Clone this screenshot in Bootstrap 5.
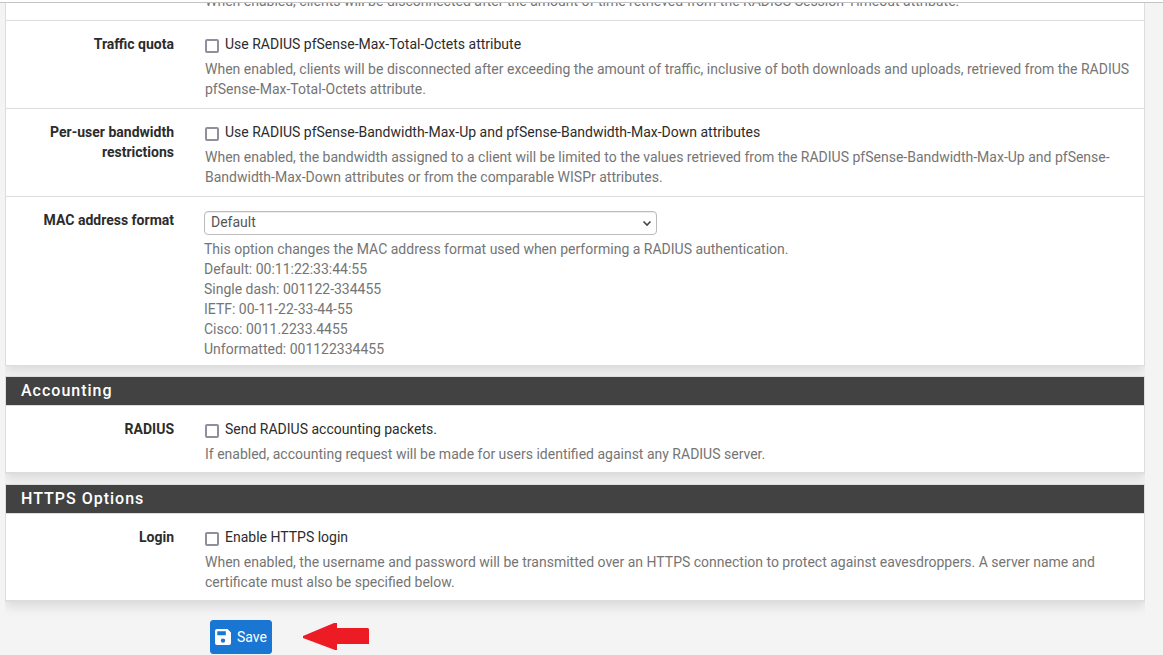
<!DOCTYPE html>
<html lang="en">
<head>
<meta charset="utf-8">
<meta name="viewport" content="width=device-width, initial-scale=1">
<title>Captive Portal</title>
<link href="https://cdn.jsdelivr.net/npm/bootstrap@5.3.0/dist/css/bootstrap.min.css" rel="stylesheet">
<style>
body { font-family: Roboto, "Liberation Sans", sans-serif; font-size: 14px; line-height: 20px; color: #2c2c2c; background: #f4f4f4; }
.top-edge { height: 3px; background: #fff; border-bottom: 1px solid #c4c4c4; }
.page-main { margin: 0 18px 0 5px; overflow: hidden; }
.panel { background: #fff; border: 1px solid #ddd; box-shadow: 0 5px 10px rgba(0,0,0,.1); margin-bottom: 10px; }
.panel.panel-first { border-top: 0; }
.panel-body { overflow: hidden; }
.panel-title { background: #424242; color: #fff; font-size: 16px; line-height: 20px; font-weight: 500; letter-spacing: 1px; padding: 4px 15px; margin: 0; border-bottom: 1px solid #ddd; }
.form-line { --bs-gutter-x: 30px; margin: 0 -10px; padding: 13px 0 9px; border-bottom: 1px solid #ddd; }
.form-line:last-child { padding-bottom: 8px; }
.form-line.line-cut { height: 18px; padding-top: 0; overflow: hidden; align-content: flex-end; }
.form-line.line-select { padding-bottom: 6px; border-bottom: 0; }
.field-name { font-weight: 700; text-align: right; }
.tick { padding-left: 1px; }
.tick input { appearance: none; flex: none; width: 14px; height: 14px; margin: 5px 6px 0 0; border: 2px solid #8f8f9d; border-radius: 2px; background: #fff; }
.tick input:checked { background: #1976d2; }
.hint { color: #757575; display: block; }
.tick + .hint, .line-cut .hint { padding-left: 1px; }
.tick + .hint { margin-top: 5px; }
.mac-select { height: 24px; margin: 1px 0 4px; padding: 0 24px 2px 6px; font-size: 14px; line-height: 20px; color: #555; border: 1px solid #bbb; border-radius: 4px; background-position: right 4px center; background-size: 10px 10px; box-shadow: inset 0 1px 1px rgba(0,0,0,.075); background-image: url("data:image/svg+xml,%3Csvg xmlns='http://www.w3.org/2000/svg' viewBox='0 0 10 10'%3E%3Cpath d='M1.5 3.5 5 7l3.500-3.500' fill='none' stroke='%23444' stroke-width='1.600'/%3E%3C/svg%3E"); }
.actions { padding: 8px 0 1px 205px; }
.btn-save { --bs-btn-color: #fff; --bs-btn-bg: #1976d2; --bs-btn-border-color: #1976d2; --bs-btn-hover-color: #fff; --bs-btn-hover-bg: #1565c0; --bs-btn-padding-x: 4px; --bs-btn-padding-y: 6px; --bs-btn-font-size: 14px; --bs-btn-line-height: 20px; --bs-btn-border-radius: 3px; gap: 6px; }
</style>
</head>
<body>
<div class="top-edge"></div>
<main class="page-main">
  <form>
    <section class="panel panel-first">
      <div class="panel-body">
        <div class="row form-line line-cut">
          <div class="col-10 offset-2"><span class="hint">When enabled, clients will be disconnected after the amount of time retrieved from the RADIUS Session-Timeout attribute.</span></div>
        </div>
        <div class="row form-line">
          <div class="col-2 field-name">Traffic quota</div>
          <div class="col-10">
            <label class="tick d-flex"><input type="checkbox"><span>Use RADIUS pfSense-Max-Total-Octets attribute</span></label>
            <span class="hint">When enabled, clients will be disconnected after exceeding the amount of traffic, inclusive of both downloads and uploads, retrieved from the RADIUS pfSense-Max-Total-Octets attribute.</span>
          </div>
        </div>
        <div class="row form-line">
          <div class="col-2 field-name">Per-user bandwidth restrictions</div>
          <div class="col-10">
            <label class="tick d-flex"><input type="checkbox"><span>Use RADIUS pfSense-Bandwidth-Max-Up and pfSense-Bandwidth-Max-Down attributes</span></label>
            <span class="hint">When enabled, the bandwidth assigned to a client will be limited to the values retrieved from the RADIUS pfSense-Bandwidth-Max-Up and pfSense-Bandwidth-Max-Down attributes or from the comparable WISPr attributes.</span>
          </div>
        </div>
        <div class="row form-line line-select">
          <label class="col-2 field-name" for="macformat">MAC address format</label>
          <div class="col-5">
            <select class="form-select mac-select" id="macformat">
              <option>Default</option><option>Single dash</option><option>IETF</option><option>Cisco</option><option>Unformatted</option>
            </select>
          </div>
          <div class="col-10 offset-2">
            <span class="hint">This option changes the MAC address format used when performing a RADIUS authentication.<br>Default: 00:11:22:33:44:55<br>Single dash: 001122-334455<br>IETF: 00-11-22-33-44-55<br>Cisco: 0011.2233.4455<br>Unformatted: 001122334455</span>
          </div>
        </div>
      </div>
    </section>
    <section class="panel">
      <h2 class="panel-title">Accounting</h2>
      <div class="panel-body">
        <div class="row form-line">
          <div class="col-2 field-name">RADIUS</div>
          <div class="col-10">
            <label class="tick d-flex"><input type="checkbox"><span>Send RADIUS accounting packets.</span></label>
            <span class="hint">If enabled, accounting request will be made for users identified against any RADIUS server.</span>
          </div>
        </div>
      </div>
    </section>
    <section class="panel">
      <h2 class="panel-title">HTTPS Options</h2>
      <div class="panel-body">
        <div class="row form-line">
          <div class="col-2 field-name">Login</div>
          <div class="col-10">
            <label class="tick d-flex"><input type="checkbox"><span>Enable HTTPS login</span></label>
            <span class="hint">When enabled, the username and password will be transmitted over an HTTPS connection to protect against eavesdroppers. A server name and certificate must also be specified below.</span>
          </div>
        </div>
      </div>
    </section>
    <div class="actions d-flex align-items-center">
      <button type="button" class="btn btn-save d-flex align-items-center">
        <svg width="16" height="16" viewBox="0 0 16 16" aria-hidden="true"><path fill="#fff" fill-rule="evenodd" d="M2 0h10.500L16 3.500V14a2 2 0 0 1-2 2H2a2 2 0 0 1-2-2V2a2 2 0 0 1 2-2zM2.300 2.200v4h8.500v-4zM8 9.400a2.200 2.200 0 1 0 0 4.400A2.200 2.200 0 0 0 8 9.400z"/></svg>
        Save
      </button>
      <svg class="ms-4" width="74" height="28" viewBox="0 0 74 28" aria-hidden="true"><path fill="#ed1c24" d="M7 13 38 0h3v5h31l1 1v15H41v6h-2L7 15z"/></svg>
    </div>
  </form>
</main>
<script src="https://cdn.jsdelivr.net/npm/bootstrap@5.3.0/dist/js/bootstrap.bundle.min.js"></script>
</body>
</html>
